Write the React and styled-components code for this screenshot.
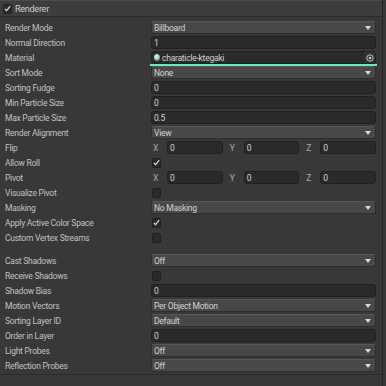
import React from 'react';
import styled, { createGlobalStyle } from 'styled-components';

const Global = createGlobalStyle`
html, body {
  margin: 0;
  padding: 0;
  background: #383838;
}
body {
  font-family: Roboto, "Liberation Sans", sans-serif;
  font-size: 8.5px;
  letter-spacing: -0.25px;
  color: #c2c2c2;
}
`;

const topRows = [
  { label: 'Render Mode', type: 'dropdown', value: 'Billboard' },
  { label: 'Normal Direction', type: 'input', value: '1' },
  { label: 'Material', type: 'object', value: 'charaticle-ktegaki' },
  { label: 'Sort Mode', type: 'dropdown', value: 'None' },
  { label: 'Sorting Fudge', type: 'input', value: '0' },
  { label: 'Min Particle Size', type: 'input', value: '0' },
  { label: 'Max Particle Size', type: 'input', value: '0.5' },
  { label: 'Render Alignment', type: 'dropdown', value: 'View' },
  { label: 'Flip', type: 'vector' },
  { label: 'Allow Roll', type: 'check', value: true },
  { label: 'Pivot', type: 'vector' },
  { label: 'Visualize Pivot', type: 'check', value: false },
  { label: 'Masking', type: 'dropdown', value: 'No Masking' },
  { label: 'Apply Active Color Space', type: 'check', value: true },
  { label: 'Custom Vertex Streams', type: 'check', value: false },
];

const bottomRows = [
  { label: 'Cast Shadows', type: 'dropdown', value: 'Off' },
  { label: 'Receive Shadows', type: 'check', value: false },
  { label: 'Shadow Bias', type: 'input', value: '0' },
  { label: 'Motion Vectors', type: 'dropdown', value: 'Per Object Motion' },
  { label: 'Sorting Layer ID', type: 'dropdown', value: 'Default' },
  { label: 'Order in Layer', type: 'input', value: '0' },
  { label: 'Light Probes', type: 'dropdown', value: 'Off' },
  { label: 'Reflection Probes', type: 'dropdown', value: 'Off' },
];

const CheckMark = () => (
  <svg width="7" height="7" viewBox="0 0 7 7">
    <path d="M0.8 3.8 L2.6 5.6 L6.2 1.2" fill="none" stroke="#e0e0e0" strokeWidth="1.1" />
  </svg>
);

const Field = ({ row }) => {
  switch (row.type) {
    case 'dropdown':
      return (
        <Dropdown>
          <Value>{row.value}</Value>
          <Arrow />
        </Dropdown>
      );
    case 'input':
      return (
        <Input>
          <Value>{row.value}</Value>
        </Input>
      );
    case 'object':
      return (
        <ObjectWrap>
          <Input>
            <ObjIcon />
            <Value>{row.value}</Value>
            <Picker>
              <svg width="8" height="8" viewBox="0 0 8 8">
                <circle cx="4" cy="4" r="3.2" fill="none" stroke="#cfcfcf" strokeWidth="0.9" />
                <circle cx="4" cy="4" r="1.3" fill="#cfcfcf" />
              </svg>
            </Picker>
          </Input>
          <Underline />
        </ObjectWrap>
      );
    case 'check':
      return <Check>{row.value && <CheckMark />}</Check>;
    case 'vector':
      return (
        <Vector>
          {['X', 'Y', 'Z'].map((a) => (
            <Axis key={a}>
              <AxisLabel>{a}</AxisLabel>
              <Input>
                <Value>0</Value>
              </Input>
            </Axis>
          ))}
        </Vector>
      );
    default:
      return null;
  }
};

const App = () => {
  return (
    <>
      <Global />
      <Panel>
        <Header>
          <Check $header>
            <CheckMark />
          </Check>
          <HeaderTitle>Renderer</HeaderTitle>
        </Header>
        <Body>
          {topRows.map((r) => (
            <Row key={r.label}>
              <Label>{r.label}</Label>
              <Field row={r} />
            </Row>
          ))}
          <Spacer />
          {bottomRows.map((r) => (
            <Row key={r.label}>
              <Label>{r.label}</Label>
              <Field row={r} />
            </Row>
          ))}
        </Body>
      </Panel>
    </>
  );
};

export default App;

const Panel = styled.div`
width: 383px;
height: 386px;
box-sizing: border-box;
border-right: 1px solid #252525;
background: #383838;
display: flex;
flex-direction: column;
`;

const Header = styled.div`
height: 17px;
box-sizing: border-box;
display: flex;
align-items: center;
gap: 3px;
padding-left: 3px;
background: #3d3d3d;
border-top: 1px solid #4c4c4c;
border-bottom: 1px solid #2a2a2a;
`;

const HeaderTitle = styled.span`
color: #cfcfcf;
font-size: 9px;
`;

const Body = styled.div`
padding: 3px 6px 0 5px;
border-bottom: 1px solid #2b2b2b;
padding-bottom: 1px;
`;

const Row = styled.div`
height: 15px;
display: grid;
grid-template-columns: 146px 1fr;
align-items: center;
`;

const Spacer = styled.div`
height: 8px;
`;

const Label = styled.span`
white-space: nowrap;
color: #c0c0c0;
`;

const Value = styled.span`
flex: 1;
white-space: nowrap;
overflow: hidden;
color: #d2d2d2;
padding-left: 2px;
`;

const Input = styled.div`
height: 13px;
box-sizing: border-box;
display: flex;
align-items: center;
background: #2a2a2a;
border: 1px solid #212121;
border-radius: 3px;
min-width: 0;
flex: 1;
`;

const Dropdown = styled.div`
height: 13px;
box-sizing: border-box;
display: flex;
align-items: center;
background: #484848;
border: 1px solid #2e2e2e;
border-top-color: #575757;
border-radius: 3px;
padding-right: 4px;
`;

const Arrow = styled.span`
width: 0;
height: 0;
border-left: 3px solid transparent;
border-right: 3px solid transparent;
border-top: 4px solid #d8d8d8;
`;

const ObjectWrap = styled.div`
position: relative;
display: flex;
flex-direction: column;
`;

const Underline = styled.div`
position: absolute;
left: -1px;
right: -1px;
bottom: -2px;
height: 2px;
background: #5ef0b4;
`;

const ObjIcon = styled.span`
width: 6px;
height: 7px;
margin-left: 2px;
border-radius: 50%;
background: radial-gradient(circle at 40% 35%, #a9f5d4 0 35%, #8a8a8a 60%);
`;

const Picker = styled.span`
width: 11px;
height: 11px;
display: flex;
align-items: center;
justify-content: center;
background: #333;
border-radius: 2px;
`;

const Check = styled.div`
width: 9px;
height: 10px;
box-sizing: border-box;
display: flex;
align-items: center;
justify-content: center;
background: ${(p) => (p.$header ? '#2c2c2c' : '#2a2a2a')};
border: 1px solid #202020;
border-radius: 2px;
margin-left: ${(p) => (p.$header ? '0' : '1px')};
`;

const Vector = styled.div`
display: grid;
grid-template-columns: repeat(3, 1fr);
gap: 5px;
`;

const Axis = styled.div`
display: flex;
align-items: center;
`;

const AxisLabel = styled.span`
width: 16px;
padding-left: 2px;
box-sizing: border-box;
color: #a8a8a8;
`;
